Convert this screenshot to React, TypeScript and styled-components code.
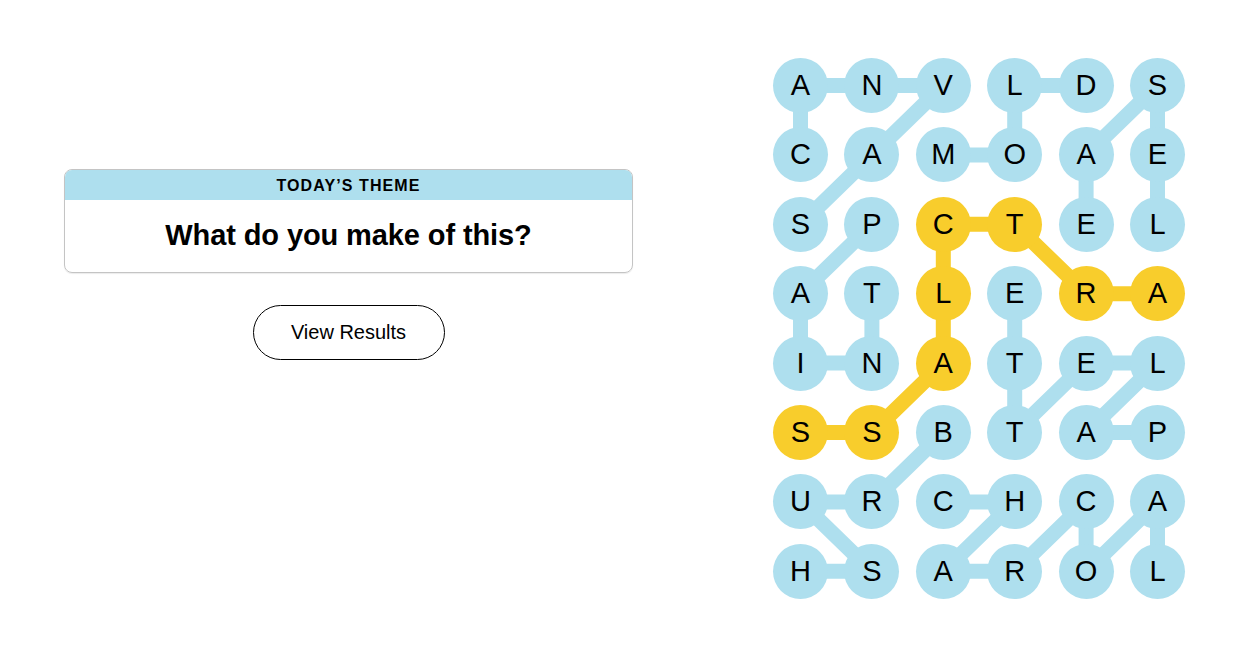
import styled, { createGlobalStyle } from 'styled-components'

/*---> Data <---*/
const LETTERS = [
  'ANVLDS',
  'CAMOAE',
  'SPCTEL',
  'ATLERA',
  'INATEL',
  'SSBTAP',
  'URCHCA',
  'HSAROL',
]

// each word is a path of [row, col] cells
const WORDS: { cells: [number, number][]; spangram?: boolean }[] = [
  { cells: [[1, 0], [0, 0], [0, 1], [0, 2], [1, 1], [2, 0]] },
  { cells: [[2, 1], [3, 0], [4, 0], [4, 1], [3, 1]] },
  { cells: [[1, 2], [1, 3], [0, 3], [0, 4]] },
  { cells: [[2, 4], [1, 4], [0, 5], [1, 5], [2, 5]] },
  { cells: [[5, 5], [5, 4], [4, 5], [4, 4], [5, 3], [4, 3], [3, 3]] },
  { cells: [[5, 2], [6, 1], [6, 0], [7, 1], [7, 0]] },
  { cells: [[6, 2], [6, 3], [7, 2], [7, 3], [6, 4], [7, 4], [6, 5], [7, 5]] },
  {
    cells: [[5, 0], [5, 1], [4, 2], [3, 2], [2, 2], [2, 3], [3, 4], [3, 5]],
    spangram: true,
  },
]

const CELL = 55
const COL_STEP = 71.4
const ROW_STEP = 69.4
const BLUE = '#aedfee'
const YELLOW = '#f8cd2c'

const spangramCells = new Set(
  WORDS.filter((w) => w.spangram).flatMap((w) => w.cells.map(([r, c]) => `${r}-${c}`))
)

const center = ([r, c]: [number, number]) => ({
  x: c * COL_STEP + CELL / 2,
  y: r * ROW_STEP + CELL / 2,
})

/*---> Components <---*/
const App = () => {
  return (
    <>
      <GlobalStyle />
      <Page>
        <LeftColumn>
          <ThemeCard>
            <ThemeHeader>TODAY’S THEME</ThemeHeader>
            <ThemeBody>What do you make of this?</ThemeBody>
          </ThemeCard>
          <ResultsButton>View Results</ResultsButton>
        </LeftColumn>
        <Board>
          <Connectors
            width={5 * COL_STEP + CELL}
            height={7 * ROW_STEP + CELL}
          >
            {WORDS.map((word, i) => (
              <polyline
                key={i}
                points={word.cells
                  .map((cell) => {
                    const p = center(cell)
                    return `${p.x},${p.y}`
                  })
                  .join(' ')}
                fill='none'
                stroke={word.spangram ? YELLOW : BLUE}
                strokeWidth={15}
                strokeLinejoin='round'
              />
            ))}
          </Connectors>
          {LETTERS.map((row, r) =>
            row.split('').map((letter, c) => (
              <Letter key={`${r}-${c}`} $spangram={spangramCells.has(`${r}-${c}`)}>
                {letter}
              </Letter>
            ))
          )}
        </Board>
      </Page>
    </>
  )
}

/*---> Styles <---*/
const GlobalStyle = createGlobalStyle`
  body {
    margin: 0;
    background: #ffffff;
    font-family: 'Liberation Sans', Arial, sans-serif;
    color: #000000;
  }
`

const Page = styled.div`
  display: flex;
  align-items: flex-start;
  gap: 141px;
  padding: 58px 0 0 65px;
  width: 1250px;
  height: 651px;
  box-sizing: border-box;
`

const LeftColumn = styled.div`
  width: 567px;
  margin-top: 111px;
  display: flex;
  flex-direction: column;
  align-items: center;
`

const ThemeCard = styled.div`
  width: 100%;
  border: 1px solid #c4c4c4;
  border-radius: 8px;
  overflow: hidden;
  box-shadow: 0 1px 1px rgba(0, 0, 0, 0.08);
`

const ThemeHeader = styled.div`
  height: 30px;
  background: ${BLUE};
  display: flex;
  align-items: center;
  justify-content: center;
  padding-top: 2px;
  box-sizing: border-box;
  font-size: 16px;
  font-weight: 700;
  letter-spacing: 1.1px;
`

const ThemeBody = styled.div`
  height: 72px;
  display: flex;
  align-items: center;
  justify-content: center;
  font-size: 29px;
  font-weight: 700;
  letter-spacing: -0.1px;
  padding-bottom: 2px;
  box-sizing: border-box;
`

const ResultsButton = styled.button`
  margin-top: 32px;
  width: 192px;
  height: 55px;
  border: 1px solid #000000;
  border-radius: 28px;
  background: #ffffff;
  font-family: 'Liberation Sans', Arial, sans-serif;
  font-size: 20px;
  color: #000000;
  cursor: pointer;
`

const Board = styled.div`
  position: relative;
  display: grid;
  grid-template-columns: repeat(6, ${CELL}px);
  grid-auto-rows: ${CELL}px;
  column-gap: ${COL_STEP - CELL}px;
  row-gap: ${ROW_STEP - CELL}px;
`

const Connectors = styled.svg`
  position: absolute;
  left: 0;
  top: 0;
  pointer-events: none;
`

const Letter = styled.div<{ $spangram: boolean }>`
  position: relative;
  width: ${CELL}px;
  height: ${CELL}px;
  border-radius: 50%;
  background: ${(p) => (p.$spangram ? YELLOW : BLUE)};
  display: flex;
  align-items: center;
  justify-content: center;
  font-size: 29px;
  line-height: 1;
  text-transform: uppercase;
`

export default App
